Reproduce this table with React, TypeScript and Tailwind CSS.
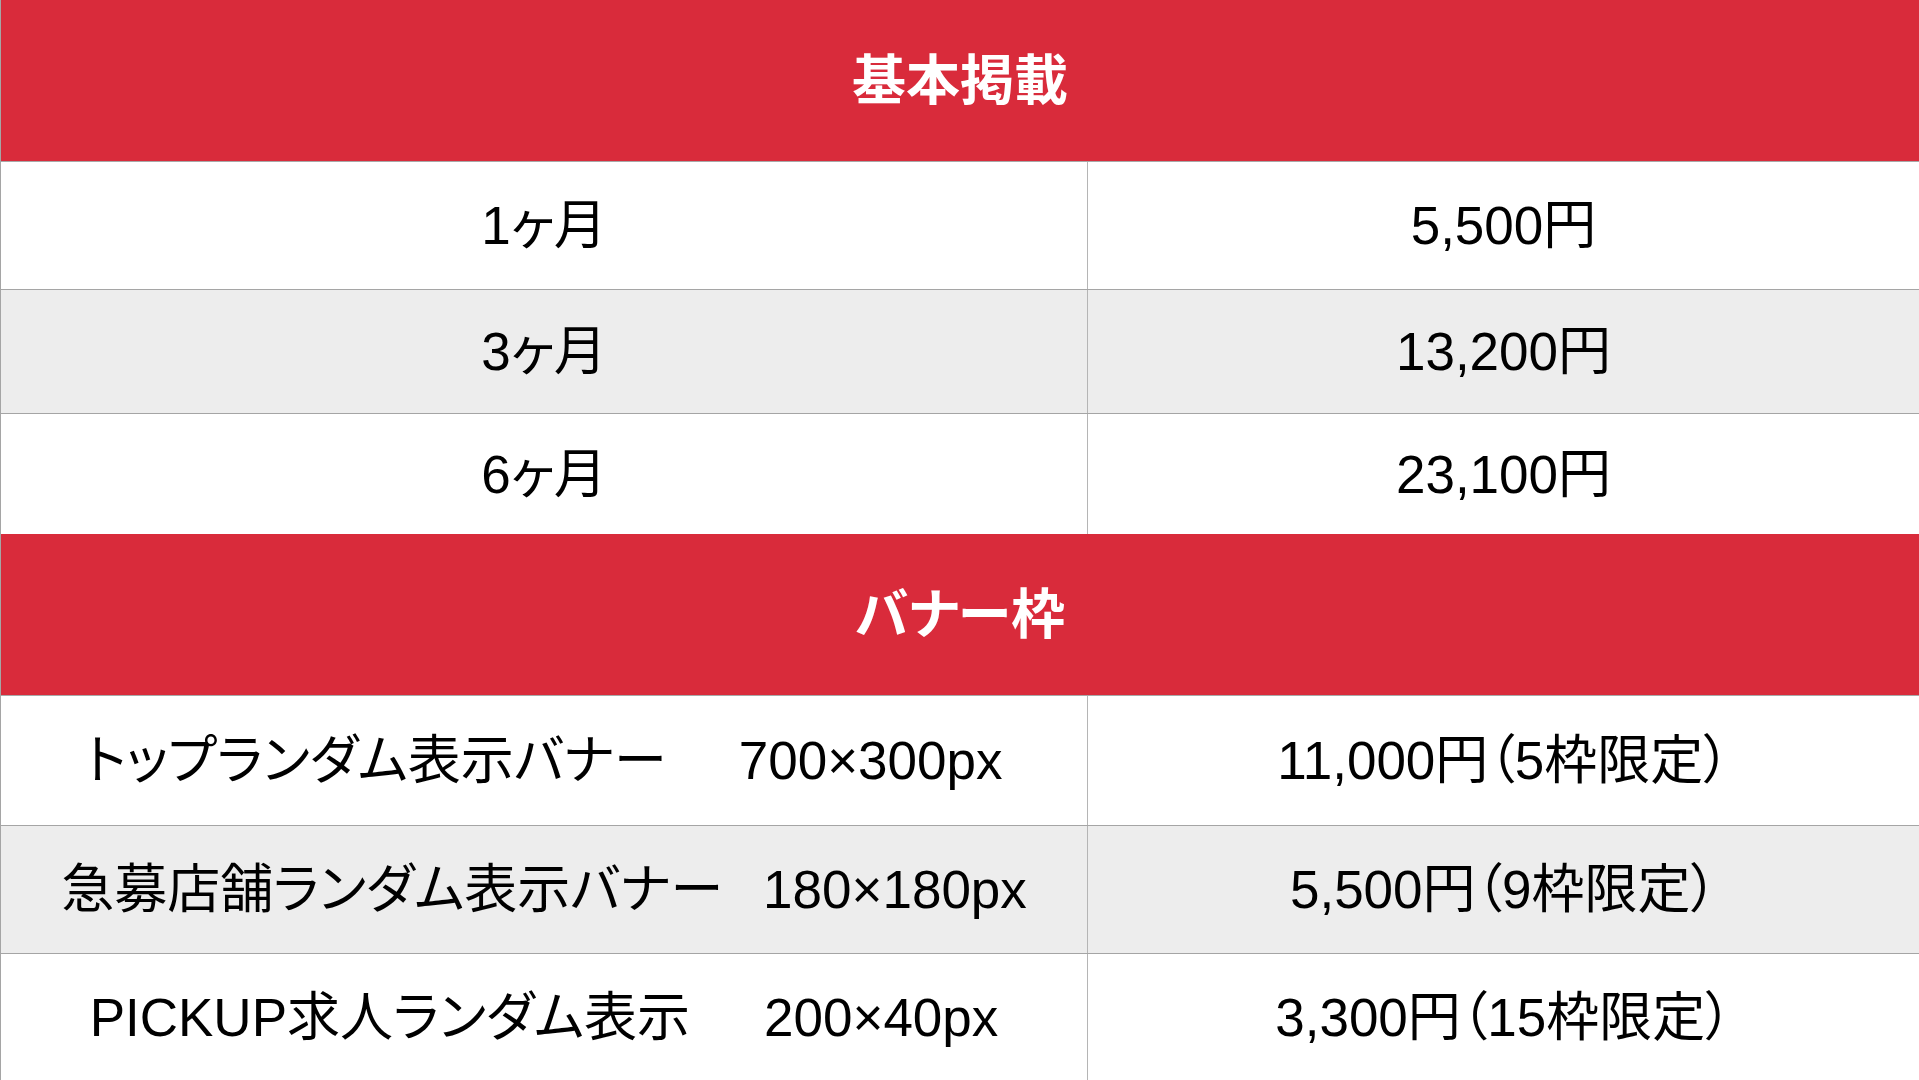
const font = "font-['Liberation_Sans','Noto_Sans_CJK_JP',sans-serif] [font-feature-settings:'palt']";

interface PriceRow {
  label: string;
  size?: string;
  gap?: string;
  price: string;
  height: string;
  shaded?: boolean;
}

const basicRows: PriceRow[] = [
  { label: "1ヶ月", price: "5,500円", height: "h-[128px]" },
  { label: "3ヶ月", price: "13,200円", height: "h-[124px]", shaded: true },
  { label: "6ヶ月", price: "23,100円", height: "h-[120px]" },
];

const bannerRows: PriceRow[] = [
  {
    label: "トップランダム表示バナー",
    size: "700×300px",
    gap: "gap-[72px]",
    price: "11,000円（5枠限定）",
    height: "h-[130px]",
  },
  {
    label: "急募店舗ランダム表示バナー",
    size: "180×180px",
    gap: "gap-[40px]",
    price: "5,500円（9枠限定）",
    height: "h-[128px]",
    shaded: true,
  },
  {
    label: "PICKUP求人ランダム表示",
    size: "200×40px",
    gap: "gap-[74px]",
    price: "3,300円（15枠限定）",
    height: "h-[126px]",
  },
];

function SectionHeader({ title }: { title: string }) {
  return (
    <div className="h-[162px] w-full bg-[#d92b3b] flex items-center justify-center border-b border-[#a8a8a8]">
      <span className="text-[54px] font-bold text-white leading-none">{title}</span>
    </div>
  );
}

function Row({ row }: { row: PriceRow }) {
  return (
    <div
      className={`flex w-full ${row.height} ${
        row.shaded ? "bg-[#ededed]" : "bg-white"
      } border-b border-[#a5a5a5] last:border-b-0`}
    >
      <div className={`w-[1087px] shrink-0 flex items-center justify-center border-r border-[#b5b5b5] ${row.gap ?? ""}`}>
        <span className="text-[53px] leading-none text-black whitespace-nowrap">{row.label}</span>
        {row.size && (
          <span className="text-[53px] leading-none text-black whitespace-nowrap">{row.size}</span>
        )}
      </div>
      <div className="flex-1 flex items-center justify-center">
        <span className="text-[53px] leading-none text-black whitespace-nowrap">{row.price}</span>
      </div>
    </div>
  );
}

export default function App() {
  return (
    <div className={`w-full h-[1080px] flex flex-col overflow-hidden border-l border-[#a5a5a5] ${font}`}>
      <SectionHeader title="基本掲載" />
      <div className="flex flex-col">
        {basicRows.map((row, index) => (
          <Row key={index} row={row} />
        ))}
      </div>
      <SectionHeader title="バナー枠" />
      <div className="flex flex-col">
        {bannerRows.map((row, index) => (
          <Row key={index} row={row} />
        ))}
      </div>
    </div>
  );
}
